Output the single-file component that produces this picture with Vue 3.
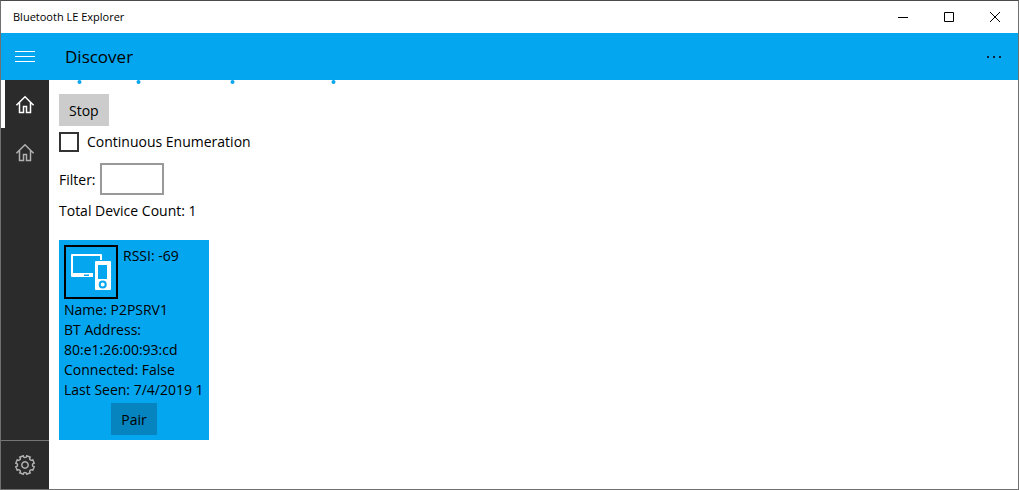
<script setup>
import { ref } from 'vue'

const continuous = ref(false)
const filter = ref('')
const progressDots = [30.5, 89.5, 183.5, 284.5]
const details = [
  'Name: P2PSRV1',
  'BT Address: 80:e1:26:00:93:cd',
  'Connected: False',
  'Last Seen: 7/4/2019 1'
]
</script>

<template>
  <div class="window">
    <header class="titlebar">
      <span class="caption">Bluetooth LE Explorer</span>
      <button class="sys" aria-label="Minimize">
        <svg width="10" height="10"><path d="M0 5.5H10" /></svg>
      </button>
      <button class="sys" aria-label="Maximize">
        <svg width="10" height="10"><path d="M.5 .5H9.5V9.5H.5Z" /></svg>
      </button>
      <button class="sys" aria-label="Close">
        <svg width="10" height="10"><path d="M0 0L10 10M10 0L0 10" /></svg>
      </button>
    </header>

    <div class="appbar">
      <button class="menu" aria-label="Menu">
        <svg width="20" height="12"><path d="M0 .5H20M0 5.5H20M0 10.5H20" /></svg>
      </button>
      <h1>Discover</h1>
      <button class="more" aria-label="More">
        <svg width="14" height="2"><path d="M0 0h2v2H0zM6 0h2v2H6zM12 0h2v2h-2z" /></svg>
      </button>
    </div>

    <div class="body">
      <nav class="rail">
        <a v-for="n in 2" :key="n" href="#" class="item" :class="{ active: n === 1 }" aria-label="Home">
          <svg width="20" height="20" viewBox="0 0 20 20">
            <path d="M1.4 11.2L10 2.7L18.600 11.2M4.500 8.500V18.500H8.500V12.500H11.500V18.500H15.500V8.500" />
          </svg>
        </a>
        <a href="#" class="item settings" aria-label="Settings">
          <svg width="20" height="20" viewBox="-10 -10 20 20">
            <circle r="3.200" />
            <path d="M-1.800 -9.200Q-1.500 -7.400 0 -7.400T1.800 -9.200L5.200 -7.800Q4.200 -6.200 5.200 -5.200T7.800 -5.200L9.200 -1.800Q7.400 -1.500 7.400 0T9.200 1.800L7.800 5.200Q6.200 4.200 5.200 5.200T5.200 7.800L1.800 9.200Q1.500 7.400 0 7.400T-1.800 9.200L-5.200 7.800Q-4.200 6.200 -5.200 5.200T-7.800 5.200L-9.200 1.800Q-7.400 1.500 -7.400 0T-9.200 -1.800L-7.800 -5.200Q-6.200 -4.200 -5.200 -5.200T-5.200 -7.800Z" />
          </svg>
        </a>
      </nav>

      <main>
        <svg class="progress" height="4" aria-hidden="true">
          <circle v-for="x in progressDots" :key="x" :cx="x" cy="2" r="2" />
        </svg>
        <div class="content">
          <button class="btn stop">Stop</button>
          <label class="check">
            <input v-model="continuous" type="checkbox">
            <span>Continuous Enumeration</span>
          </label>
          <div class="filter">
            <label for="filter">Filter:</label>
            <input id="filter" v-model="filter" type="text">
          </div>
          <p class="count">Total Device Count: 1</p>
          <article class="card">
            <div class="top">
              <div class="glyph">
                <svg width="50" height="50" viewBox="0 0 50 50">
                  <path class="fill" fill-rule="evenodd" d="M6 7H35Q36 7 36 8V13H34V9H7V26H27V30H6Q5 30 5 29V8Q5 7 6 7ZM18 27.500V29H23V27.500Z" />
                  <path class="fill" fill-rule="evenodd" d="M30 14H44Q45 14 45 15V42Q45 43 44 43H30Q29 43 29 42V15Q29 14 30 14ZM32 18V32H41V18Z" />
                  <circle class="dial" cx="36.7" cy="37.5" r="3" />
                </svg>
              </div>
              <span>RSSI: -69</span>
            </div>
            <p v-for="line in details" :key="line">{{ line }}</p>
            <button class="btn pair">Pair</button>
          </article>
        </div>
      </main>
    </div>
  </div>
</template>

<style>
body { margin: 0; }
</style>

<style scoped>
.window {
  box-sizing: border-box;
  display: flex;
  flex-direction: column;
  min-height: 100vh;
  border: 1px solid #707070;
  border-top-color: #4a4a4a;
  background: #fff;
  color: #000;
  font: 14px/20px "Open Sans", "Noto Sans", sans-serif;
}
button {
  padding: 0;
  border: 0;
  background: none;
  color: inherit;
  font: inherit;
}
svg { display: block; fill: none; }
p { margin: 0; }
.titlebar { display: flex; height: 32px; }
.caption {
  flex: 1;
  padding-left: 12px;
  font-size: 11px;
  line-height: 32px;
}
.sys { display: grid; place-items: center; width: 46px; }
.sys svg { stroke: #000; }
.appbar {
  display: flex;
  align-items: center;
  height: 47px;
  background: #05a6f0;
}
.menu { display: grid; place-items: center; width: 48px; height: 47px; }
.menu svg { stroke: #fff; }
h1 {
  flex: 1;
  margin: 0 0 0 16px;
  font-size: 17px;
  line-height: 24px;
  font-weight: 400;
}
.more { display: grid; place-items: center; width: 48px; height: 47px; }
.more svg { fill: #06253a; }
.body { display: flex; flex: 1; }
.rail {
  display: flex;
  flex-direction: column;
  width: 48px;
  background: #2b2b2b;
}
.item {
  box-sizing: border-box;
  display: grid;
  place-items: center;
  height: 48px;
  position: relative;
}
.item svg { stroke: #b0b0b0; stroke-width: 1.5; }
.item.active svg { stroke: #fff; }
.item.active::before {
  content: "";
  position: absolute;
  inset: 0 auto 0 0;
  width: 4px;
  background: #fff;
}
.settings { margin-top: auto; height: 49px; border-top: 1px solid #767676; }
main { flex: 1; min-width: 0; }
.progress { width: 100%; fill: #05a6f0; }
.content {
  display: flex;
  flex-direction: column;
  align-items: flex-start;
  padding: 10px 10px 0;
}
.btn { height: 32px; padding: 2px 10px 0; }
.stop { background: #ccc; }
.check { display: flex; align-items: center; gap: 8px; height: 32px; }
.check input {
  appearance: none;
  box-sizing: border-box;
  width: 20px;
  height: 20px;
  margin: 0;
  border: 2px solid #333;
}
.check input:checked { background: #05a6f0; }
.filter { display: flex; align-items: center; gap: 4px; margin-top: 5px; }
.filter label { line-height: 22px; padding-top: 2px; }
.filter input {
  box-sizing: border-box;
  width: 64px;
  height: 32px;
  padding: 0 8px;
  border: 2px solid #999;
  font: inherit;
}
.count { margin: 6px 0 19px; }
.card {
  box-sizing: border-box;
  display: flex;
  flex-direction: column;
  width: 150px;
  padding: 5px 0 5px 5px;
  background: #05a6f0;
}
.card p { padding-right: 2px; }
.top { display: flex; gap: 5px; margin-bottom: 1px; line-height: 22px; }
.glyph { border: 2px solid #000; }
.fill { fill: #fff; }
.dial { stroke: #05a6f0; stroke-width: 2; }
.pair { align-self: center; margin: 3px 5px 0 0; background: #0584c0; }
</style>
